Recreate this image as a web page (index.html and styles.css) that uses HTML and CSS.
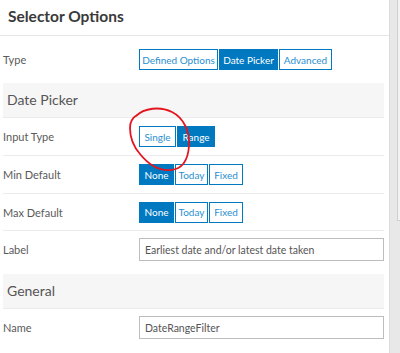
FILE: index.html
```html
<!doctype html>
<html lang="en">
<head>
    <meta charset="UTF-8">
    <title>Selector Options</title>
    <link rel="stylesheet" href="styles.css">
</head>
<body>
    <div class="page">
        <div class="panel">
            <div class="title">Selector Options</div>

            <div class="row row-type">
                <label class="label">Type</label>
                <div class="btn-group">
                    <button class="btn w-defined">Defined Options</button>
                    <button class="btn active w-picker">Date Picker</button>
                    <button class="btn w-advanced">Advanced</button>
                </div>
            </div>

            <div class="section">Date Picker</div>

            <div class="row">
                <label class="label">Input Type</label>
                <div class="btn-group">
                    <button class="btn w-single">Single</button>
                    <button class="btn active w-range">Range</button>
                </div>
            </div>

            <div class="row">
                <label class="label">Min Default</label>
                <div class="btn-group">
                    <button class="btn active w-none">None</button>
                    <button class="btn w-today">Today</button>
                    <button class="btn w-fixed">Fixed</button>
                </div>
            </div>

            <div class="row row-short">
                <label class="label">Max Default</label>
                <div class="btn-group">
                    <button class="btn active w-none">None</button>
                    <button class="btn w-today">Today</button>
                    <button class="btn w-fixed">Fixed</button>
                </div>
            </div>

            <div class="row row-input">
                <label class="label">Label</label>
                <input type="text" class="field" value="Earliest date and/or latest date taken"/>
            </div>

            <div class="section">General</div>

            <div class="row row-input row-last">
                <label class="label">Name</label>
                <input type="text" class="field" value="DateRangeFilter"/>
            </div>

            <svg class="scribble" width="72" height="72" viewBox="0 0 72 72">
                <path d="M12 10 C 20 2, 36 0, 48 6 C 60 12, 66 26, 65 40 C 64 54, 58 63, 47 64 C 35 65, 24 58, 16 48 C 9 40, 6 30, 6 22 C 6 16, 8 12, 13 9"/>
            </svg>
        </div>
        <div class="scroll">
            <div class="thumb"></div>
        </div>
    </div>
</body>
</html>
```

FILE: styles.css
```css
body {
    margin: 0;
    background: #ffffff;
    font-family: 'Lato', 'Open Sans', sans-serif;
    color: #555555;
}
.page {
    display: flex;
    width: 400px;
    height: 353px;
    overflow: hidden;
}
.panel {
    position: relative;
    width: 389px;
}
.title {
    height: 35px;
    line-height: 32px;
    padding-left: 8px;
    font-size: 15.5px;
    font-weight: bold;
    color: #3a3a3a;
    border-bottom: 1px solid #e6e6e6;
}
.row {
    display: flex;
    align-items: center;
    height: 37px;
    margin-left: 3px;
    width: 381px;
    border-bottom: 1px solid #ebebeb;
}
.row-type {
    height: 47px;
    border-bottom: none;
}
.row-short {
    height: 36px;
}
.row-input {
    height: 37px;
    padding-bottom: 6px;
    border-bottom: none;
}
.row-last {
    height: 37px;
}
.label {
    width: 136px;
    font-size: 11px;
    color: #5a5a5a;
}
.section {
    height: 34px;
    line-height: 34px;
    margin-left: 3px;
    width: 377px;
    padding-left: 4px;
    background: #f6f6f6;
    font-size: 14px;
    color: #555555;
    border-bottom: 1px solid #ebebeb;
}
.btn-group {
    display: flex;
}
.btn {
    height: 21px;
    padding: 0;
    margin-right: 1px;
    background: #ffffff;
    border: 1px solid #0079c1;
    color: #2a8fd0;
    font-family: 'Lato', sans-serif;
    font-size: 10px;
    cursor: pointer;
}
.btn.active {
    background: #0079c1;
    color: #ffffff;
}
.w-defined { width: 79px; }
.w-picker { width: 59px; }
.w-advanced { width: 53px; }
.w-single { width: 37px; }
.w-range { width: 38px; }
.w-none { width: 35px; }
.w-today { width: 33px; }
.w-fixed { width: 34px; }
.field {
    width: 245px;
    height: 23px;
    box-sizing: border-box;
    margin: 0;
    padding: 0 5px;
    border: 1px solid #bdbdbd;
    font-family: 'Lato', sans-serif;
    font-size: 10.5px;
    color: #555555;
}
.scribble {
    position: absolute;
    left: 124px;
    top: 106px;
}
.scribble path {
    fill: none;
    stroke: #e3151f;
    stroke-width: 1.8;
}
.scroll {
    flex: 1;
    background: #e8e8e8;
    border-left: 1px solid #dcdcdc;
    padding: 0 0 0 7px;
}
.thumb {
    height: 220px;
    background: #f3f3f3;
    border-left: 1px solid #cfcfcf;
    border-bottom: 1px solid #cfcfcf;
}
```
